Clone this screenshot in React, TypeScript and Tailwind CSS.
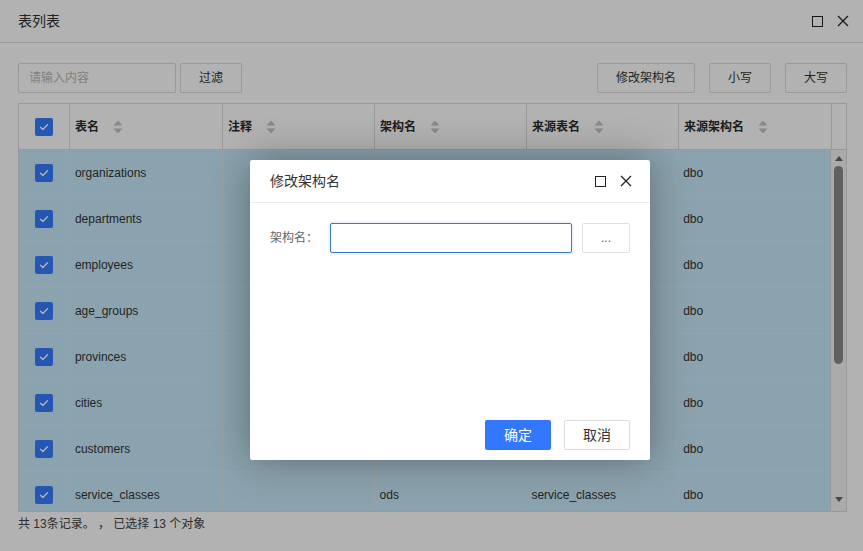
import React from 'react';

const rows = [
  'organizations',
  'departments',
  'employees',
  'age_groups',
  'provinces',
  'cities',
  'customers',
  'service_classes',
];

const cols = [
  { title: '表名', w: 'w-[153px]' },
  { title: '注释', w: 'w-[152px]' },
  { title: '架构名', w: 'w-[152px]' },
  { title: '来源表名', w: 'w-[152px]' },
  { title: '来源架构名', w: 'w-[153px]' },
];

const Check = () => (
  <span className="flex h-[18px] w-[18px] items-center justify-center rounded-[2px] bg-[#347cff]">
    <svg width="12" height="12" viewBox="0 0 12 12" fill="none">
      <path d="M2.5 6.2l2.4 2.3 4.6-4.8" stroke="white" strokeWidth="1.4" strokeLinecap="round" strokeLinejoin="round" />
    </svg>
  </span>
);

const Sort = () => (
  <svg width="10" height="14" viewBox="0 0 10 14" className="ml-[14px]">
    <path d="M5 0.5L9.5 5.5H0.5z" fill="#c4c4c4" />
    <path d="M5 13.5L9.5 8.5H0.5z" fill="#c4c4c4" />
  </svg>
);

const MaxIcon = () => (
  <span className="block h-[11px] w-[11px] border-[1.5px] border-[#222]" />
);

const CloseIcon = () => (
  <svg width="12" height="12" viewBox="0 0 12 12">
    <path d="M1 1l10 10M11 1L1 11" stroke="#222" strokeWidth="1.3" />
  </svg>
);

const Btn = ({ children, w }: { children: React.ReactNode; w: string }) => (
  <button className={`${w} h-[30px] rounded-[2px] border border-[#dcdcdc] bg-white text-[12px] text-[#333]`}>
    {children}
  </button>
);

export default function App() {
  return (
    <div
      className="relative flex h-[551px] w-full flex-col overflow-hidden bg-white text-[#333]"
      style={{ fontFamily: '"Liberation Sans", "Noto Sans CJK SC", sans-serif' }}
    >
      {/* window header */}
      <div className="flex h-[43px] shrink-0 items-center justify-between border-b border-[#dedede] pl-[18px] pr-[14px]">
        <span className="text-[14px] text-[#333]">表列表</span>
        <div className="flex items-center gap-[14px]">
          <MaxIcon />
          <CloseIcon />
        </div>
      </div>

      {/* toolbar */}
      <div className="flex items-center justify-between pl-[18px] pr-[16px] pt-[20px]">
        <div className="flex gap-[4px]">
          <input
            placeholder="请输入内容"
            className="h-[30px] w-[158px] rounded-[2px] border border-[#dcdcdc] px-[10px] text-[12px] outline-none placeholder:text-[#b8b8b8]"
          />
          <Btn w="w-[62px]">过滤</Btn>
        </div>
        <div className="flex gap-[14px]">
          <Btn w="w-[98px]">修改架构名</Btn>
          <Btn w="w-[62px]">小写</Btn>
          <Btn w="w-[62px]">大写</Btn>
        </div>
      </div>

      {/* table */}
      <div className="ml-[18px] mr-[16px] mt-[10px] flex h-[409px] flex-col overflow-hidden border border-[#dcdcdc]">
        <div className="flex h-[46px] shrink-0 border-b border-[#dcdcdc] bg-white text-[12px] font-bold text-[#2a2a2a]">
          <div className="flex w-[51px] items-center justify-center border-r border-[#dcdcdc]">
            <Check />
          </div>
          {cols.map((c) => (
            <div key={c.title} className={`${c.w} flex items-center border-r border-[#dcdcdc] pl-[5px]`}>
              {c.title}
              <Sort />
            </div>
          ))}
          <div className="flex-1" />
        </div>
        <div className="flex min-h-0 flex-1">
          <div className="flex-1 overflow-hidden">
            {rows.map((r) => (
              <div key={r} className="flex h-[46px] border-b border-[#dde8ee] bg-[#c7eafa] text-[12px] text-[#333]">
                <div className="flex w-[51px] items-center justify-center border-r border-[#dde8ee]">
                  <Check />
                </div>
                <div className="flex w-[153px] items-center border-r border-[#dde8ee] pl-[5px]">{r}</div>
                <div className="flex w-[152px] items-center border-r border-[#dde8ee] pl-[5px]" />
                <div className="flex w-[152px] items-center border-r border-[#dde8ee] pl-[5px]">ods</div>
                <div className="flex w-[152px] items-center border-r border-[#dde8ee] pl-[5px]">{r}</div>
                <div className="flex w-[152px] items-center pl-[5px]">dbo</div>
              </div>
            ))}
          </div>
          {/* scrollbar */}
          <div className="flex w-[16px] shrink-0 flex-col items-center border-l border-[#dcdcdc] bg-[#f4f4f4] py-[4px]">
            <svg width="8" height="5" viewBox="0 0 8 5" className="mt-[2px]">
              <path d="M4 0L8 5H0z" fill="#666" />
            </svg>
            <div className="mt-[5px] h-[198px] w-[9px] rounded-full bg-[#8a8a8a]" />
            <div className="flex-1" />
            <svg width="8" height="5" viewBox="0 0 8 5" className="mb-[5px]">
              <path d="M4 5L8 0H0z" fill="#666" />
            </svg>
          </div>
        </div>
      </div>

      <div className="pl-[18px] pt-[3px] text-[12px] text-[#444]">共 13条记录。 ， 已选择 13 个对象</div>

      {/* mask */}
      <div className="absolute inset-0 bg-black/30" />

      {/* dialog */}
      <div className="absolute left-[250px] top-[160px] flex h-[300px] w-[400px] flex-col rounded-[2px] bg-white shadow-[0_0_40px_rgba(0,0,0,0.35)]">
        <div className="flex h-[43px] shrink-0 items-center justify-between border-b border-[#ececec] pl-[20px] pr-[18px]">
          <span className="text-[14px] text-[#333]">修改架构名</span>
          <div className="flex items-center gap-[14px]">
            <MaxIcon />
            <CloseIcon />
          </div>
        </div>
        <div className="flex items-center px-[20px] pt-[20px]">
          <span className="w-[60px] text-[12px] text-[#666]">架构名：</span>
          <input className="h-[30px] w-[242px] rounded-[2px] border border-[#3b76c9] px-[8px] text-[12px] shadow-[0_0_0_2px_rgba(59,118,201,0.08)] outline-none" />
          <button className="ml-[10px] h-[30px] w-[48px] rounded-[2px] border border-[#e0e0e0] text-[12px] text-[#555]">...</button>
        </div>
        <div className="flex-1" />
        <div className="flex justify-end gap-[13px] pb-[10px] pr-[20px]">
          <button className="h-[30px] w-[66px] rounded-[2px] bg-[#3377ff] text-[14px] text-white">确定</button>
          <button className="h-[30px] w-[66px] rounded-[2px] border border-[#dcdcdc] bg-white text-[14px] text-[#333]">取消</button>
        </div>
      </div>
    </div>
  );
}
